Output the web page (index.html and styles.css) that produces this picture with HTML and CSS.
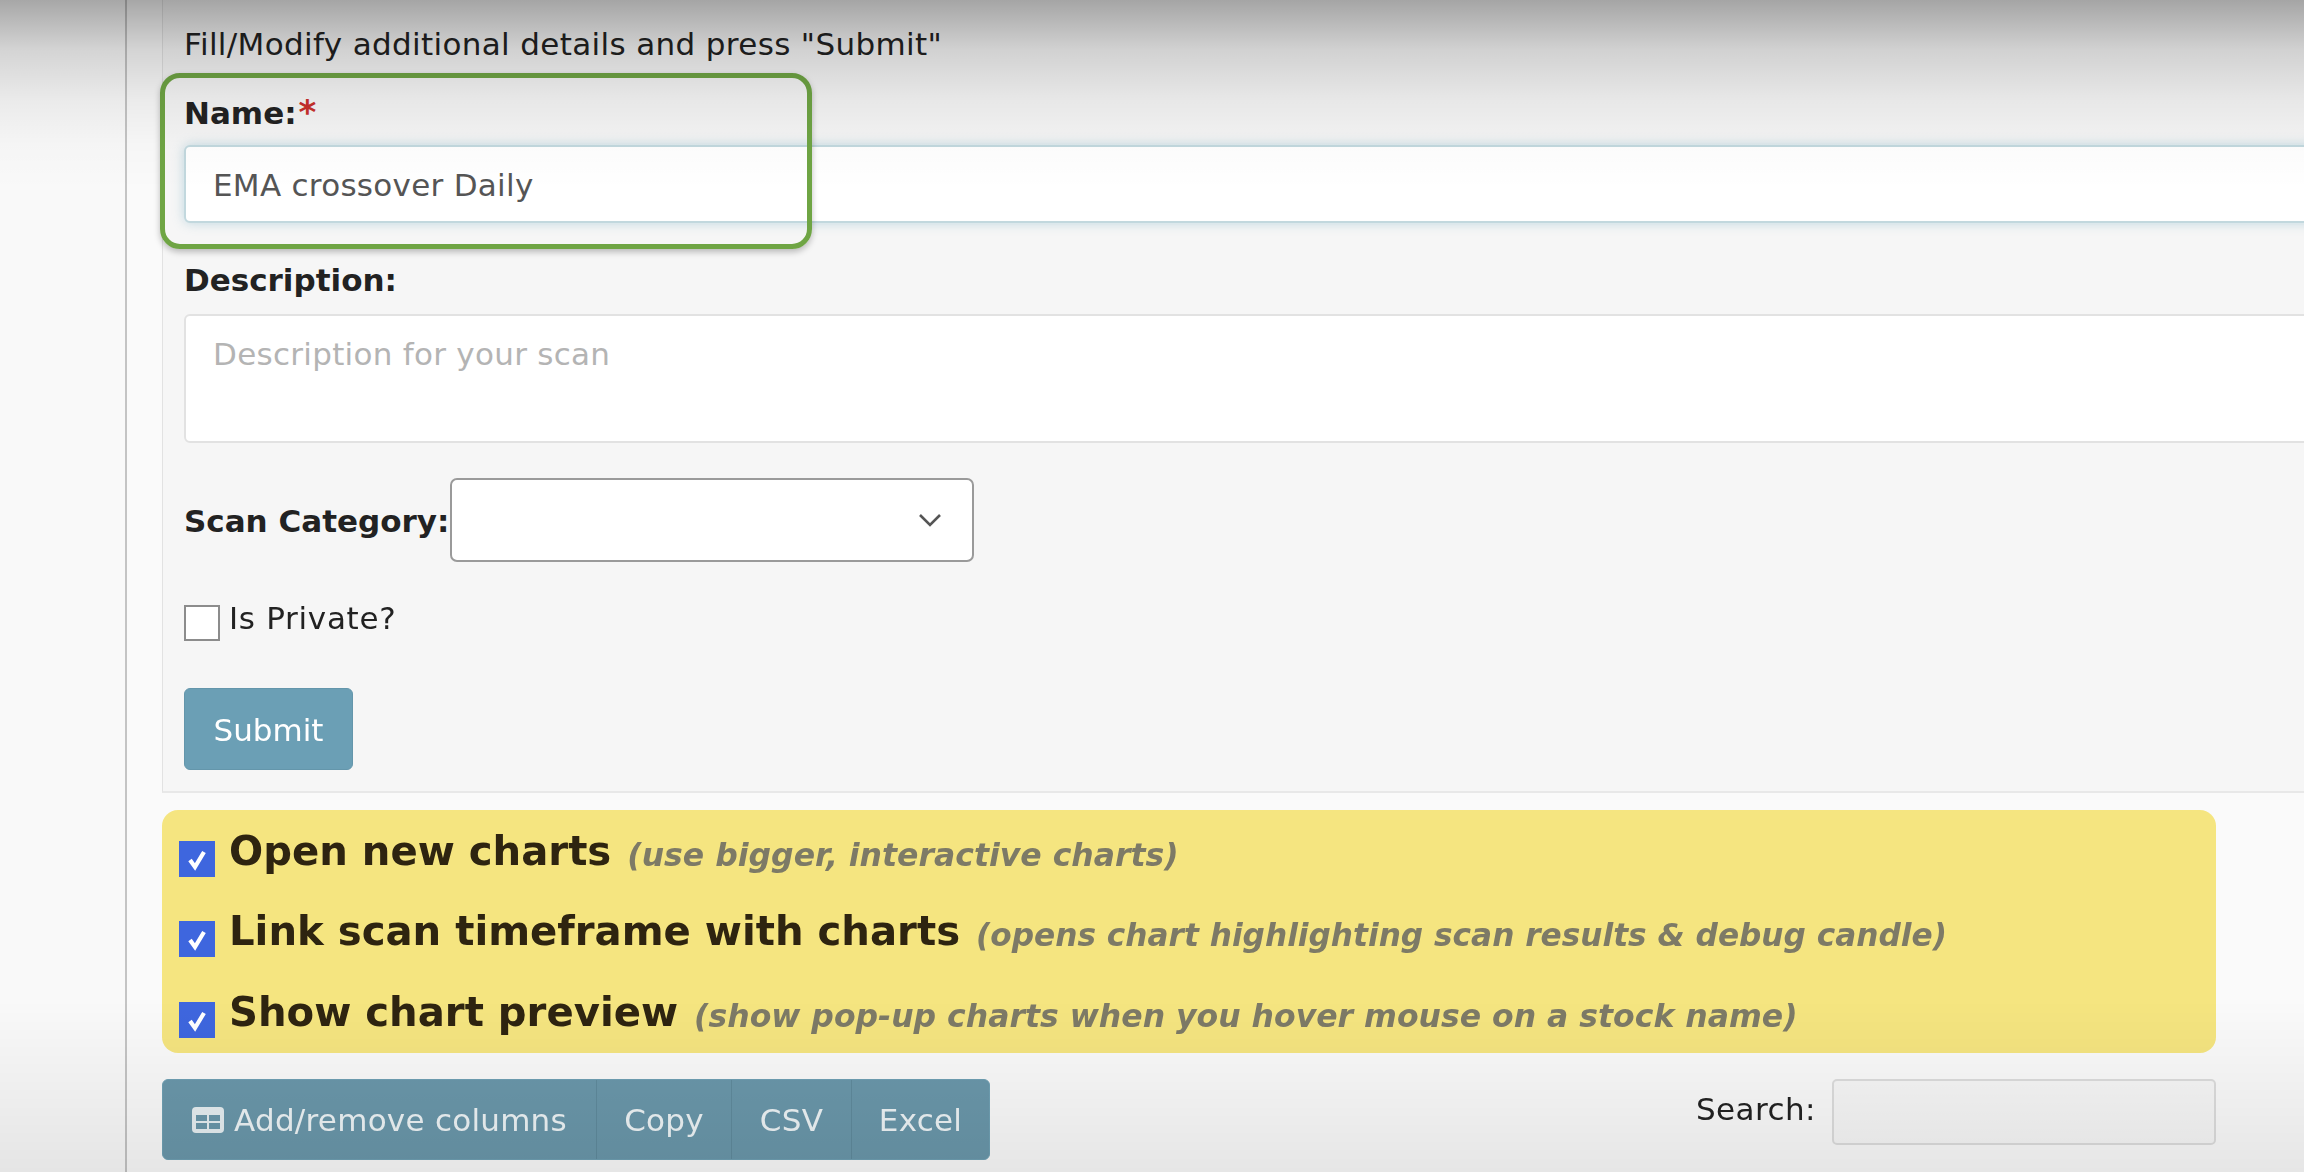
FILE: index.html
```html
<!DOCTYPE html>
<html lang="en">
<head>
<meta charset="utf-8">
<title>Scan details</title>
<link rel="stylesheet" href="styles.css">
</head>
<body>
<div class="page">
  <aside class="rail"></aside>
  <main class="main">
    <form class="panel">
      <p class="intro">Fill/Modify additional details and press "Submit"</p>
      <div class="name-field">
        <label class="label">Name:<span class="req">*</span></label>
        <input class="text-input" type="text" value="EMA crossover Daily">
        <div class="highlight"></div>
      </div>
      <label class="label desc-label">Description:</label>
      <textarea class="text-area" placeholder="Description for your scan"></textarea>
      <div class="category-row">
        <label class="label category-label">Scan Category:</label>
        <div class="select">
          <svg class="chevron" viewBox="0 0 24 14" width="24" height="14"><path d="M2 2l10 10L22 2" fill="none" stroke="#555" stroke-width="2.6"/></svg>
        </div>
      </div>
      <div class="private-row">
        <span class="box"></span>
        <span class="private-text">Is Private?</span>
      </div>
      <button class="submit" type="button">Submit</button>
    </form>

    <section class="options">
      <div class="option">
        <span class="tick"><svg viewBox="0 0 36 36" width="36" height="36"><path d="M11 19l5 7 9-15" fill="none" stroke="#fff" stroke-width="4.2"/></svg></span>
        <strong class="option-title">Open new charts</strong>
        <em class="option-note">(use bigger, interactive charts)</em>
      </div>
      <div class="option">
        <span class="tick"><svg viewBox="0 0 36 36" width="36" height="36"><path d="M11 19l5 7 9-15" fill="none" stroke="#fff" stroke-width="4.2"/></svg></span>
        <strong class="option-title">Link scan timeframe with charts</strong>
        <em class="option-note option-note-long">(opens chart highlighting scan results &amp; debug candle)</em>
      </div>
      <div class="option">
        <span class="tick"><svg viewBox="0 0 36 36" width="36" height="36"><path d="M11 19l5 7 9-15" fill="none" stroke="#fff" stroke-width="4.2"/></svg></span>
        <strong class="option-title">Show chart preview</strong>
        <em class="option-note">(show pop-up charts when you hover mouse on a stock name)</em>
      </div>
    </section>

    <div class="toolbar">
      <div class="btn-group">
        <button class="btn btn-columns" type="button">
          <svg class="table-icon" viewBox="0 0 32 26" width="32" height="26"><rect width="32" height="26" rx="4" fill="#e6eef1"/><rect x="4" y="8" width="11" height="6" fill="#6a97aa"/><rect x="17" y="8" width="11" height="6" fill="#6a97aa"/><rect x="4" y="16" width="11" height="6" fill="#6a97aa"/><rect x="17" y="16" width="11" height="6" fill="#6a97aa"/></svg>
          Add/remove columns
        </button>
        <button class="btn btn-copy" type="button">Copy</button>
        <button class="btn btn-csv" type="button">CSV</button>
        <button class="btn btn-excel" type="button">Excel</button>
      </div>
      <div class="search">
        <label class="search-label">Search:</label>
        <input class="search-input" type="text">
      </div>
    </div>
  </main>
  <div class="shade-top"></div>
  <div class="shade-bottom"></div>
</div>
</body>
</html>
```

FILE: styles.css
```css
* { box-sizing: border-box; }
html, body { margin: 0; height: 100%; overflow: hidden; }
body { background: #fafafa; font-family: "DejaVu Sans", sans-serif; color: #222; }

.page { position: relative; display: flex; width: 2304px; height: 1172px; overflow: hidden; filter: blur(0.6px); }
.rail { width: 127px; flex: none; border-right: 2px solid #c4c4c4; background: #f9f9f9; }
.main { flex: none; width: 2177px; padding-left: 35px; }

.panel { width: 2160px; height: 793px; padding: 22px 0 0 21px; background: #f6f6f6; border-left: 1px solid #e2e2e2; border-bottom: 2px solid #e8e8e8; display: flex; flex-direction: column; align-items: flex-start; }
.intro { margin: 0; height: 44px; line-height: 44px; font-size: 31px; letter-spacing: 0.35px; white-space: nowrap; }
.label { display: block; height: 40px; line-height: 40px; font-size: 31px; font-weight: 700; white-space: nowrap; }
.req { margin-left: 2px; font-size: 34px; color: #c9302c; }

.name-field { position: relative; margin-top: 26px; }
.text-input, .text-area { display: block; width: 2139px; background: #fff; font-family: inherit; font-size: 31px; letter-spacing: 0.28px; color: #555; border-radius: 6px; outline: none; }
.text-input { height: 78px; margin-top: 13px; padding: 2px 27px 0; border: 2px solid #c2d8de; box-shadow: 0 0 12px rgba(120, 175, 195, .45); }
.highlight { position: absolute; left: -24px; top: -19px; width: 652px; height: 176px; border: 5px solid #6fa544; border-radius: 20px; box-shadow: 0 3px 6px rgba(0, 0, 0, .25); pointer-events: none; }

.desc-label { margin-top: 37px; }
.text-area { height: 129px; margin-top: 14px; padding: 20px 27px; border: 2px solid #e2e2e2; resize: none; }
.text-area::placeholder { color: #b4b4b4; opacity: 1; }

.category-row { display: flex; align-items: center; margin-top: 35px; height: 84px; }
.category-label { padding-top: 2px; height: 42px; }
.select { width: 524px; height: 84px; margin-left: 1px; display: flex; align-items: center; justify-content: flex-end; padding-right: 30px; background: #fff; border: 2px solid #9a9a9a; border-radius: 7px; }

.private-row { display: flex; align-items: flex-start; margin-top: 43px; height: 36px; }
.box { width: 36px; height: 36px; background: #fff; border: 2px solid #8c8c8c; }
.private-text { margin: -7px 0 0 9px; line-height: 40px; font-size: 31px; letter-spacing: 0.7px; }

.submit { width: 169px; height: 82px; margin-top: 47px; padding: 2px 0 0; background: #6b9fb5; color: #fff; border: 1px solid #6496ab; border-radius: 6px; font-family: inherit; font-size: 31px; }

.options { width: 2054px; height: 243px; margin-top: 17px; padding: 21px 0 0 17px; background: #f5e580; border-radius: 16px; display: flex; flex-direction: column; gap: 40px; }
.option { display: flex; align-items: flex-start; height: 40px; white-space: nowrap; }
.option:last-child { padding-top: 1px; }
.tick { flex: none; width: 36px; height: 36px; margin-top: 10px; background: #3e66de; }
.option-title { margin-left: 14px; line-height: 40px; font-size: 40.2px; color: #2e2410; }
.option-note { margin-left: 16px; line-height: 40px; padding-top: 4px; font-size: 31.5px; font-weight: 700; color: #7d7a66; }
.option-note-long { font-size: 31.2px; }

.toolbar { display: flex; justify-content: space-between; align-items: flex-start; width: 2054px; margin-top: 26px; }
.btn-group { display: flex; height: 81px; background: #6a97aa; border-radius: 6px; border: 1px solid #6fa0b3; }
.btn { display: flex; align-items: center; justify-content: center; height: 100%; padding: 1px 0 0; background: none; color: #eef4f6; border: 0; border-right: 1px solid #5f8a9c; font-family: inherit; font-size: 31px; letter-spacing: 0.25px; }
.btn-columns { width: 434px; gap: 10px; }
.btn-copy { width: 135px; }
.btn-csv { width: 120px; }
.btn-excel { width: 137px; border-right: 0; }
.search { display: flex; align-items: flex-start; }
.search-label { margin: 10px 16px 0 0; line-height: 40px; font-size: 31px; letter-spacing: 0.45px; }
.search-input { width: 384px; height: 66px; background: #f6f6f6; border: 2px solid #dcdcdc; border-radius: 5px; outline: none; }

.shade-top, .shade-bottom { position: absolute; left: 0; width: 100%; pointer-events: none; }
.shade-top { top: 0; height: 190px; background: linear-gradient(to bottom, rgba(0, 0, 0, .33) 0, rgba(0, 0, 0, .15) 50px, rgba(0, 0, 0, .06) 100px, rgba(0, 0, 0, .015) 145px, rgba(0, 0, 0, 0) 190px); }
.shade-bottom { bottom: 0; height: 172px; background: linear-gradient(to bottom, rgba(0, 0, 0, 0), rgba(0, 0, 0, .08)); }
```
